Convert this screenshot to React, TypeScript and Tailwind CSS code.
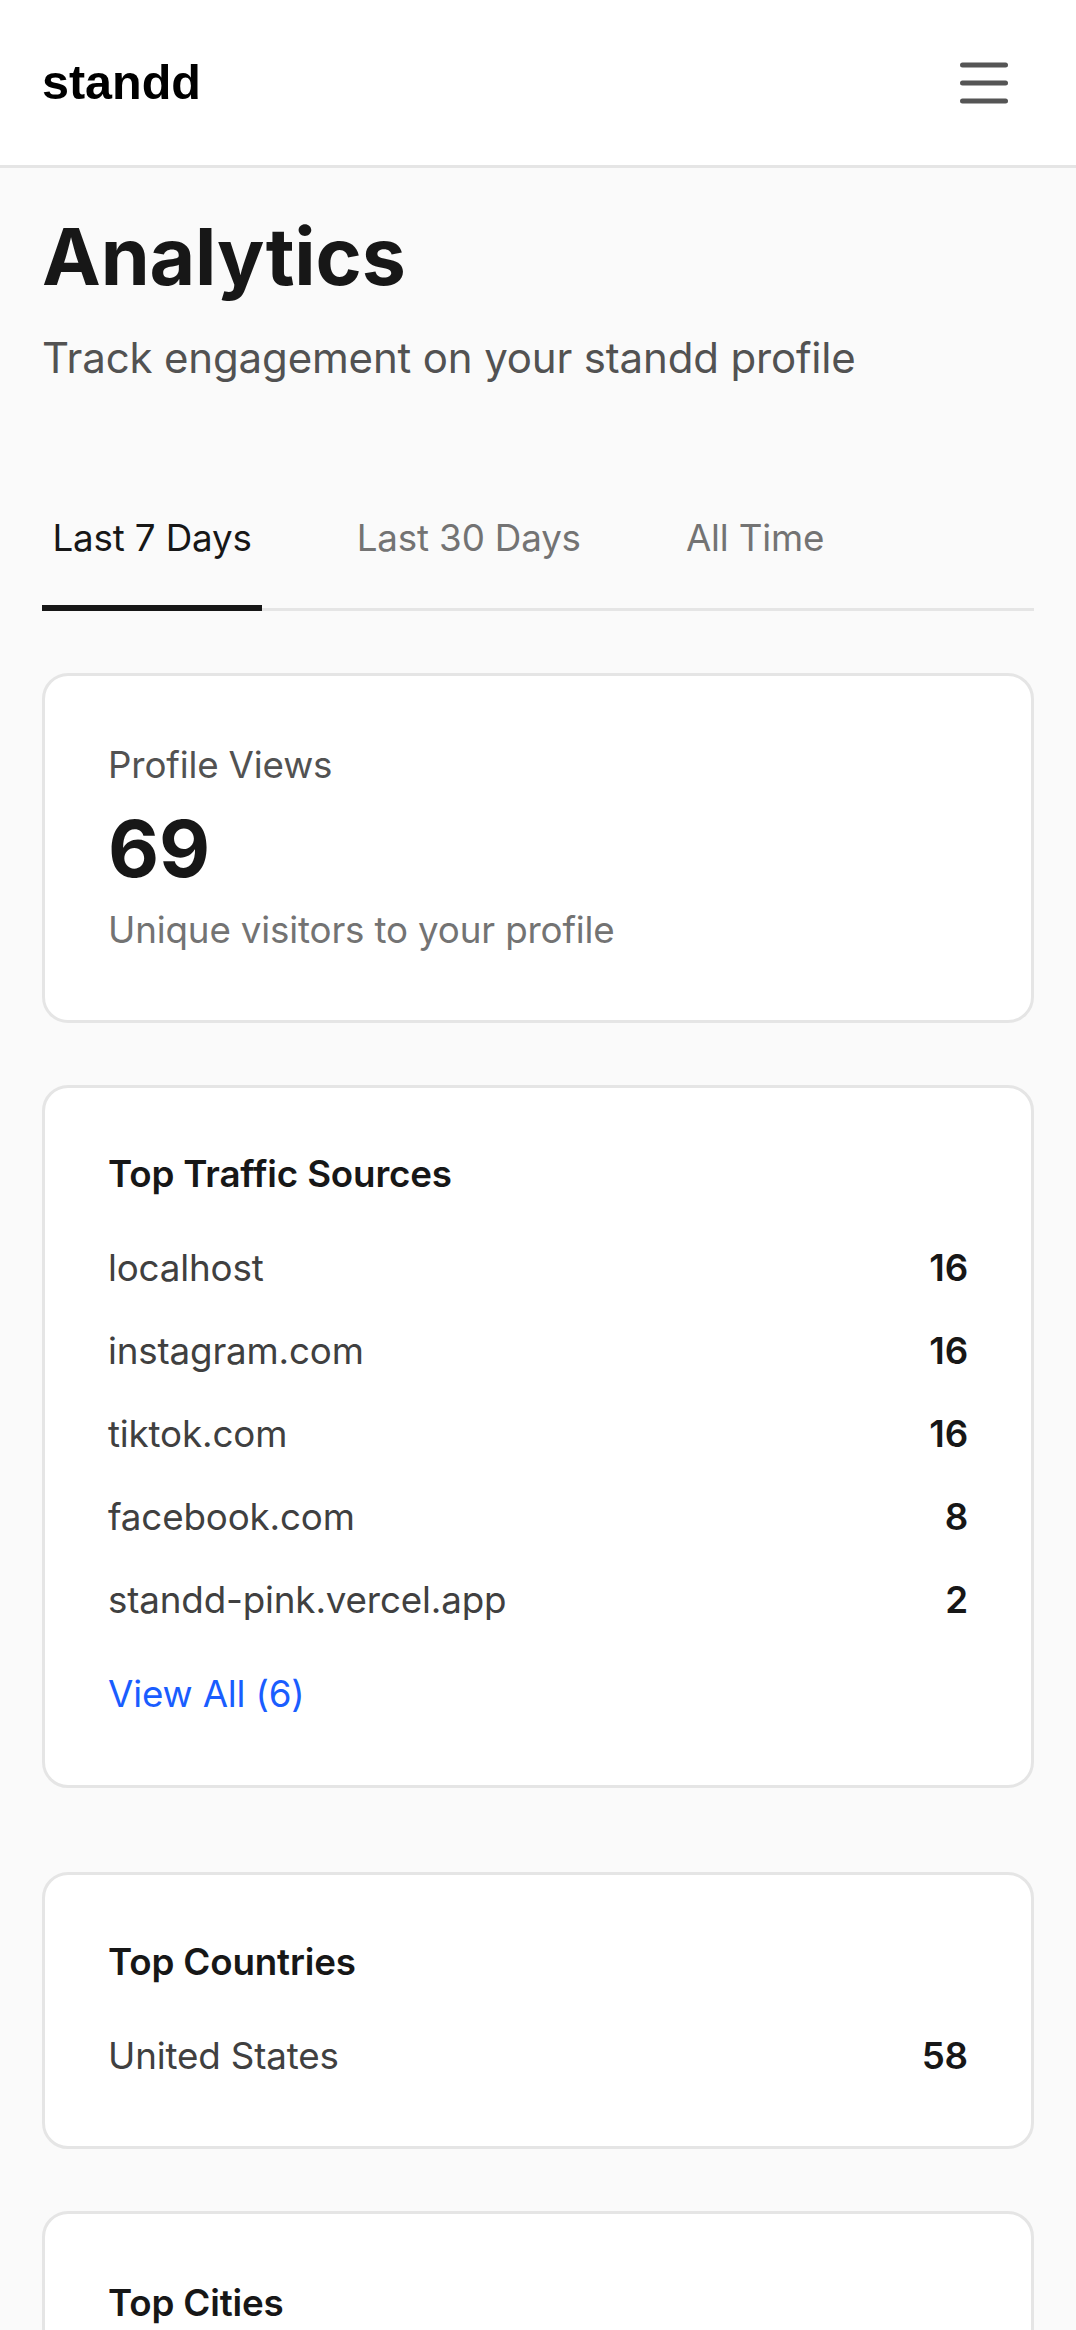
const sources = [
  { name: "localhost", count: 16 },
  { name: "instagram.com", count: 16 },
  { name: "tiktok.com", count: 16 },
  { name: "facebook.com", count: 8 },
  { name: "standd-pink.vercel.app", count: 2 },
];

const tabs = ["Last 7 Days", "Last 30 Days", "All Time"];

const Row = ({ label, value }: { label: string; value: number }) => (
  <div className="flex items-center justify-between text-[36.75px] leading-[52.5px]">
    <span className="text-[#404040]">{label}</span>
    <span className="font-semibold text-[#171717]">{value}</span>
  </div>
);

const App = () => {
  return (
    <div className="min-h-screen bg-[#fafafa] font-['Inter','Noto_Sans',sans-serif] tracking-[-0.01em] text-[#171717]">
      {/* Top bar */}
      <header className="flex h-[168px] items-center justify-between border-b-[3px] border-[#e5e5e5] bg-white px-[42px]">
        <span className="font-['Liberation_Sans',Arial,sans-serif] text-[48.5px] font-bold leading-none tracking-normal text-black">
          standd
        </span>
        <button aria-label="Menu" className="mr-[26px]">
          <svg width="48" height="42" viewBox="0 0 48 42" fill="none" stroke="#555555" strokeWidth="5" strokeLinecap="round">
            <line x1="2.5" y1="3" x2="45.5" y2="3" />
            <line x1="2.5" y1="21" x2="45.5" y2="21" />
            <line x1="2.5" y1="39" x2="45.5" y2="39" />
          </svg>
        </button>
      </header>

      <main className="px-[42px] pt-[42px] pb-[63px]">
        {/* Heading */}
        <h1 className="text-[78.75px] font-bold leading-[94.5px] text-[#171717]">Analytics</h1>
        <p className="mt-[21px] text-[42px] leading-[63px] text-[#525252]">
          Track engagement on your standd profile
        </p>

        {/* Range tabs */}
        <div className="mt-[81px] flex gap-[84px] border-b-[3px] border-[#e5e5e5]">
          {tabs.map((t, i) => (
            <button
              key={t}
              className={
                i === 0
                  ? "-mb-[3px] border-b-[6px] border-[#171717] px-[10.5px] pt-[40px] pb-[40px] text-[36.75px] leading-[55px] text-[#171717]"
                  : "-mb-[3px] border-b-[6px] border-transparent px-[10.5px] pt-[40px] pb-[40px] text-[36.75px] leading-[55px] text-[#737373]"
              }
            >
              {t}
            </button>
          ))}
        </div>

        {/* Profile views */}
        <div className="mt-[62px] rounded-[26px] border-[3px] border-[#e5e5e5] bg-white p-[63px]">
          <div className="text-[36.75px] leading-[52.5px] text-[#525252]">Profile Views</div>
          <div className="mt-[10.5px] text-[78.75px] font-bold leading-[94.5px] text-[#171717]">69</div>
          <div className="mt-[8px] text-[36.75px] leading-[52.5px] text-[#737373]">Unique visitors to your profile</div>
        </div>

        {/* Traffic sources */}
        <div className="mt-[62px] rounded-[26px] border-[3px] border-[#e5e5e5] bg-white px-[63px] pt-[60px] pb-[64.5px]">
          <h2 className="text-[36.75px] font-semibold leading-[52.5px] text-[#171717]">Top Traffic Sources</h2>
          <div className="mt-[42px] flex flex-col gap-[30.5px]">
            {sources.map((s) => (
              <Row key={s.name} label={s.name} value={s.count} />
            ))}
          </div>
          <a href="#" className="mt-[41.5px] block text-[36.75px] leading-[52.5px] text-[#1a5dff]">
            View All (6)
          </a>
        </div>

        {/* Countries */}
        <div className="mt-[84px] rounded-[26px] border-[3px] border-[#e5e5e5] bg-white px-[63px] pt-[61px] pb-[63px]">
          <h2 className="text-[36.75px] font-semibold leading-[52.5px] text-[#171717]">Top Countries</h2>
          <div className="mt-[41.5px] flex flex-col gap-[30.5px]">
            <Row label="United States" value={58} />
          </div>
        </div>

        {/* Cities */}
        <div className="mt-[62px] rounded-[26px] border-[3px] border-[#e5e5e5] bg-white p-[63px] pb-[126px]">
          <h2 className="text-[36.75px] font-semibold leading-[52.5px] text-[#171717]">Top Cities</h2>
        </div>
      </main>
    </div>
  );
};

export default App;
